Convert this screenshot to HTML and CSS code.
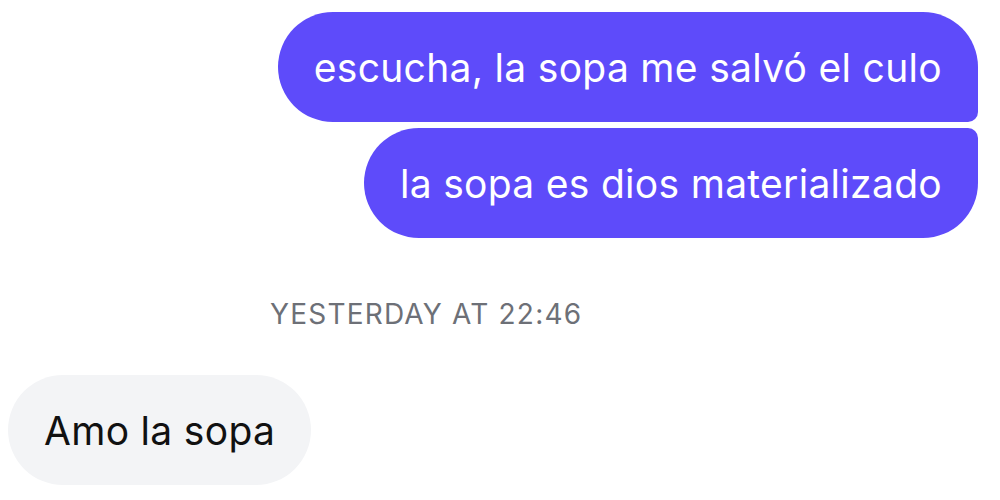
FILE: index.html
```html
<!DOCTYPE html>
<html>
<head>
<meta charset="utf-8">
<link rel="stylesheet" href="styles.css">
</head>
<body>
<div class="chat">
  <div class="outgoing">
    <div class="bubble sent first">escucha, la sopa me salvó el culo</div>
    <div class="bubble sent last">la sopa es dios materializado</div>
  </div>
  <div class="stamp">YESTERDAY AT 22:46</div>
  <div class="incoming">
    <div class="bubble received">Amo la sopa</div>
  </div>
</div>
</body>
</html>
```

FILE: styles.css
```css
html, body {
  margin: 0;
  padding: 0;
  background: #ffffff;
}
.chat {
  width: 1000px;
  height: 500px;
  box-sizing: border-box;
  padding: 12px 22px 0 8px;
  font-family: Inter, "Noto Sans", sans-serif;
  display: flex;
  flex-direction: column;
}
.outgoing {
  display: flex;
  flex-direction: column;
  align-items: flex-end;
  gap: 6px;
}
.bubble {
  height: 110px;
  box-sizing: border-box;
  padding: 0 36px;
  display: flex;
  align-items: center;
  font-size: 39px;
  letter-spacing: 0.3px;
  white-space: nowrap;
}
.sent {
  background: #5e4bfa;
  color: #ffffff;
}
.first {
  border-radius: 55px 55px 10px 55px;
}
.last {
  border-radius: 55px 10px 55px 55px;
}
.stamp {
  margin-top: 60px;
  padding-left: 262px;
  font-size: 28px;
  line-height: 32px;
  color: #6d7077;
  letter-spacing: 1.2px;
}
.incoming {
  display: flex;
  margin-top: 45px;
}
.received {
  background: #f3f4f6;
  color: #111111;
  border-radius: 55px;
}
```
